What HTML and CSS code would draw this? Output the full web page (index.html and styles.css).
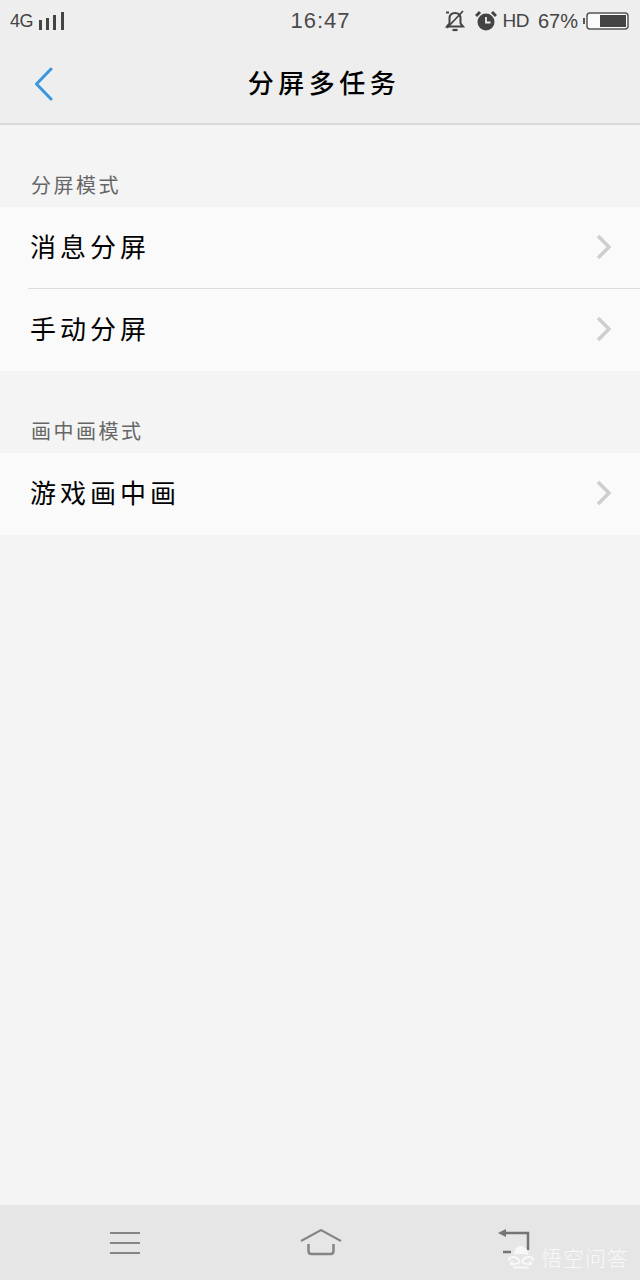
FILE: index.html
```html
<!DOCTYPE html>
<html lang="zh">
<head>
<meta charset="utf-8">
<title>分屏多任务</title>
<link rel="stylesheet" href="styles.css">
</head>
<body>
<div class="app">
  <header class="top">
    <div class="status">
      <div class="status-left">
        <span class="net">4G</span>
        <svg class="signal" width="26" height="18" viewBox="0 0 26 18"><g fill="#444"><rect x="0" y="8" width="3" height="10"/><rect x="7" y="6" width="3" height="12"/><rect x="14" y="3" width="3" height="15"/><rect x="22" y="0" width="3" height="18"/></g></svg>
      </div>
      <div class="clock">16:47</div>
      <div class="status-right">
        <svg class="bell" width="22" height="22" viewBox="0 0 22 22" fill="none" stroke="#444" stroke-width="2"><path d="M3 16.500h16l-2.500-3V8.500C16.500 5 14.500 3 11 3S5.500 5 5.500 8.500v5z"/><path d="M2 2.500h3M19 1 3 18" stroke-width="1.800"/><path d="M8.500 20h5" stroke-width="2.200"/></svg>
        <svg class="alarm" width="22" height="22" viewBox="0 0 22 22"><circle cx="11" cy="12" r="8.500" fill="#444"/><path d="M1 6 5 2M21 6l-4-4" stroke="#444" stroke-width="3"/><path d="M11 7v5.500h4.500" fill="none" stroke="#eee" stroke-width="1.800"/></svg>
        <span class="hd">HD</span>
        <span class="pct">67%</span>
        <svg class="battery" width="46" height="18" viewBox="0 0 46 18"><rect x="0" y="6" width="2" height="6" fill="#555"/><rect x="4" y="1" width="41" height="16" rx="3" fill="#fafafa" stroke="#555" stroke-width="1.500"/><rect x="17" y="3" width="26" height="12" fill="#444"/></svg>
      </div>
    </div>
    <div class="nav">
      <svg class="back" width="20" height="34" viewBox="0 0 20 34" fill="none" stroke="#3a97dc" stroke-width="3" stroke-linecap="round" stroke-linejoin="round"><path d="M17 2 2.500 17 17 32"/></svg>
      <h1 class="title">分屏多任务</h1>
    </div>
  </header>

  <main class="content">
    <h2 class="section-label">分屏模式</h2>
    <ul class="group">
      <li class="row"><span class="row-text">消息分屏</span><svg class="chev" width="16" height="26" viewBox="0 0 16 26" fill="none" stroke="#cecece" stroke-width="3.500"><path d="M2 2l11 11L2 24"/></svg></li>
      <li class="row row-split"><span class="row-text">手动分屏</span><svg class="chev" width="16" height="26" viewBox="0 0 16 26" fill="none" stroke="#cecece" stroke-width="3.500"><path d="M2 2l11 11L2 24"/></svg></li>
    </ul>
    <h2 class="section-label">画中画模式</h2>
    <ul class="group">
      <li class="row"><span class="row-text">游戏画中画</span><svg class="chev" width="16" height="26" viewBox="0 0 16 26" fill="none" stroke="#cecece" stroke-width="3.500"><path d="M2 2l11 11L2 24"/></svg></li>
    </ul>
  </main>

  <footer class="bottom">
    <svg width="30" height="24" viewBox="0 0 30 24" stroke="#858585" stroke-width="2"><path d="M0 2h30M0 12h30M0 22h30"/></svg>
    <svg class="home" width="42" height="28" viewBox="0 0 42 28" fill="none" stroke="#858585" stroke-width="2"><path d="M1 12 21 1l20 11"/><path d="M8.500 15v7q0 3 3 3h19q3 0 3-3v-7" stroke-width="2.500"/></svg>
    <svg width="32" height="28" viewBox="0 0 32 28" fill="none" stroke="#757575" stroke-width="2.500"><path d="M5 4h25v17"/><path d="M0 4l8-4v8z" fill="#757575" stroke="none"/><path d="M5 23h8"/></svg>
  </footer>

  <div class="watermark">
    <svg width="28" height="24" viewBox="0 0 28 24" fill="none" stroke="#f8f8f8" stroke-width="2.200" stroke-linecap="round"><path d="M8 9q1-7 6-7t6 7" fill="#f8f8f8"/><path d="M2 15q0-3 4-3t6 3-4 4-3-2M26 15q0-3-4-3t-6 3 4 4 3-2M7 22.500h14"/></svg>
    <span class="wm-text">悟空问答</span>
  </div>
</div>
</body>
</html>
```

FILE: styles.css
```css
* { box-sizing: border-box; }
html, body { margin: 0; padding: 0; }
body { font-family: "Noto Sans CJK SC", "Liberation Sans", sans-serif; }
.app { position: relative; width: 640px; height: 1280px; display: flex; flex-direction: column; background: #f4f4f4; overflow: hidden; }

.top { height: 125px; flex: none; background: #eeeeee; border-bottom: 2px solid #dadada; }
.status { height: 42px; padding: 0 11px 0 10px; display: flex; align-items: center; justify-content: space-between; color: #444; font-family: "Liberation Sans", sans-serif; }
.status-left, .status-right { width: 190px; display: flex; align-items: center; }
.status-right { justify-content: flex-end; }
.net { font-size: 18px; letter-spacing: -0.5px; margin-right: 6px; }
.clock { font-size: 22px; letter-spacing: 1px; color: #4a4a4a; margin-left: 2px; }
.bell { margin-right: 9px; }
.alarm { margin-right: 6px; }
.hd { font-size: 19px; letter-spacing: -0.5px; margin-right: 9px; }
.pct { font-size: 20px; margin-right: 5px; }

.nav { position: relative; height: 81px; display: flex; align-items: center; justify-content: center; }
.back { position: absolute; left: 34px; top: 25px; }
.title { margin: 0 0 2px 8px; font-size: 26px; font-weight: 500; letter-spacing: 4.500px; color: #000; }

.content { flex: 1; }
.section-label { margin: 0; height: 82px; padding: 45px 0 0 31px; font-size: 20px; line-height: 30px; font-weight: 400; letter-spacing: 2.500px; color: #666; }
.group { margin: 0; padding: 0; list-style: none; background: #fafafa; }
.row { position: relative; height: 82px; padding: 0 28px 4px 30px; display: flex; align-items: center; justify-content: space-between; }
.row-split::before { content: ""; position: absolute; left: 28px; right: 0; top: -1px; border-top: 1px solid #dcdcdc; }
.row-text { font-size: 26px; line-height: 36px; letter-spacing: 4px; color: #000; }
.chev { margin-top: 2px; }

.bottom { height: 75px; flex: none; background: #e6e6e6; padding: 0 110px; display: flex; align-items: center; justify-content: space-between; }
.home { margin-left: 3px; }

.watermark { position: absolute; right: 11px; bottom: 10px; display: flex; align-items: center; gap: 6px; color: #f8f8f8; }
.wm-text { font-size: 21px; line-height: 26px; letter-spacing: 1px; font-weight: 300; }
```
